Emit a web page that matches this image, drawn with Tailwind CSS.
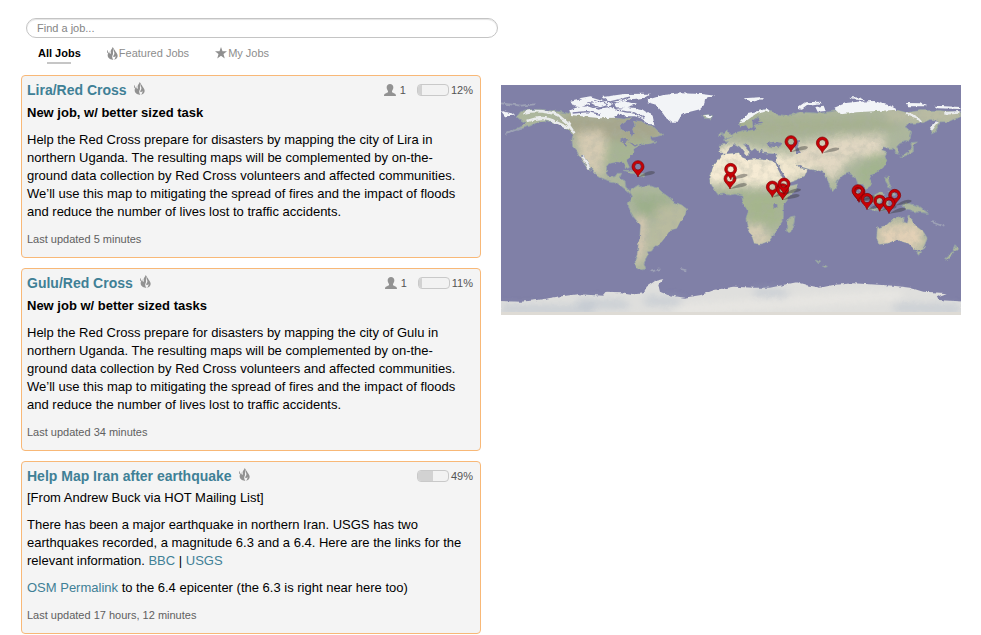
<!DOCTYPE html>
<html lang="en">
<head>
<meta charset="utf-8">
<meta name="viewport" content="width=device-width, initial-scale=1">
<title>Jobs</title>
<script src="https://cdn.jsdelivr.net/npm/@tailwindcss/browser@4"></script>
</head>
<body class="bg-white font-['Liberation_Sans',Arial,sans-serif] text-[13px] leading-[18px] text-black">
<svg class="hidden" aria-hidden="true">
  <symbol id="flame" viewBox="0 0 33 39">
    <path d="M16 0C25 5 17 12 18 18C19 24 14 26 16 32C17 35 18 36 19 38C10 39 2 33 2 25C2 19 5 16 7 13C6 19 9 21 11 20C13 17 9 14 12 9C14 6 17 4 16 0Z"/>
    <path d="M24 7C22 13 32 18 32 27C32 33 27 37 21 38C25 34 26 30 25 26C24 29 22 31 19 30C17 25 24 22 22 17C20 13 20 10 24 7Z"/>
    <path d="M2 9C1 13 5 15 1 19C-1 15-1 11 2 9Z"/>
  </symbol>
  <symbol id="person" viewBox="0 0 36 36">
    <path d="M18 0C24 0 28 4 28 10C28 15 26 18 24 21V25C28 28 36 28 36 36H0C0 28 8 28 12 25V21C10 18 8 15 8 10C8 4 12 0 18 0Z"/>
  </symbol>
  <symbol id="star" viewBox="0 0 24 24">
    <path d="M12 0L15 8.500H24L17 14L19.500 23L12 17.500L4.500 23L7 14L0 8.500H9Z"/>
  </symbol>
  <symbol id="pin" viewBox="-20 -20 80 56" overflow="visible">
    <path fill="#333" fill-opacity=".4" d="M0 31L20 19Q38 10 50 15Q54 21 36 25Z"/>
    <path fill="#c80005" stroke="#7d0004" stroke-width="2" fill-rule="evenodd" d="M0 31C-4 18-18 12-18 0A18 18 0 0 1 18 0C18 12 4 18 0 31ZM0-10A10 10 0 0 0 0 10A10 10 0 0 0 0-10Z"/>
  </symbol>
</svg>

<div class="pt-[18px] pl-[21px] pr-5">
  <header class="pl-[5px]">
    <input type="search" aria-label="Find a job" placeholder="Find a job..." class="block h-5 w-full max-w-[472px] rounded-full border border-[#c4c4c4] px-[10px] text-[11px] text-[#555] shadow-[inset_0_1px_1px_#e4e4e4] outline-none placeholder:text-[#858585]">
    <nav class="mt-[6px] flex h-[31px] gap-[26px] pl-3 text-[11px] text-[#8d8d8d]">
      <a href="#all" class="flex flex-col items-center font-bold text-black">All Jobs<span class="h-[2px] w-6 bg-[#c6c6c6]"></span></a>
      <a href="#featured" class="flex h-[18px] items-center gap-px"><svg class="h-[13px] w-[11px] fill-[#8f8f8f]"><use href="#flame"/></svg>Featured Jobs</a>
      <a href="#mine" class="flex h-[18px] items-center gap-px"><svg class="size-3 fill-[#8f8f8f]"><use href="#star"/></svg>My Jobs</a>
    </nav>
  </header>

  <main class="grid grid-cols-2 items-start gap-5">
    <section class="flex flex-col gap-[10px]">
      <article class="rounded border border-[#f8b877] bg-[#f4f4f4] px-[5px] pt-[5px] pb-[9px]">
        <header class="flex items-center">
          <h2 class="text-[14px] font-bold text-[#3f8096]"><a href="#lira">Lira/Red Cross</a></h2>
          <svg class="mb-1 ml-[7px] h-[13px] w-[11px] fill-[#929292]"><use href="#flame"/></svg>
          <div class="ml-auto flex items-center pr-[2px] text-[11px] text-[#555]">
            <svg class="mr-1 size-3 fill-[#929292]"><use href="#person"/></svg>1
            <span class="mr-[2px] ml-[11px] h-3 w-8 overflow-hidden rounded border border-[#c9c9c9] bg-[#f2f2f2]"><span class="block h-full bg-[#d2d2d2]" style="width:12%"></span></span>12%
          </div>
        </header>
        <h3 class="mt-[5px] font-bold">New job, w/ better sized task</h3>
        <p class="mt-[9px] pr-2">Help the Red Cross prepare for disasters by mapping the city of Lira in northern Uganda. The resulting maps will be complemented by on-the-ground data collection by Red Cross volunteers and affected communities. We’ll use this map to mitigating the spread of fires and the impact of floods and reduce the number of lives lost to traffic accidents.</p>
        <footer class="mt-[9px] text-[11px] text-[#606060]">Last updated 5 minutes</footer>
      </article>

      <article class="rounded border border-[#f8b877] bg-[#f4f4f4] px-[5px] pt-[5px] pb-[9px]">
        <header class="flex items-center">
          <h2 class="text-[14px] font-bold text-[#3f8096]"><a href="#gulu">Gulu/Red Cross</a></h2>
          <svg class="mb-1 ml-[7px] h-[13px] w-[11px] fill-[#929292]"><use href="#flame"/></svg>
          <div class="ml-auto flex items-center pr-[2px] text-[11px] text-[#555]">
            <svg class="mr-1 size-3 fill-[#929292]"><use href="#person"/></svg>1
            <span class="mr-[2px] ml-[11px] h-3 w-8 overflow-hidden rounded border border-[#c9c9c9] bg-[#f2f2f2]"><span class="block h-full bg-[#d2d2d2]" style="width:11%"></span></span>11%
          </div>
        </header>
        <h3 class="mt-[5px] font-bold">New job w/ better sized tasks</h3>
        <p class="mt-[9px] pr-2">Help the Red Cross prepare for disasters by mapping the city of Gulu in northern Uganda. The resulting maps will be complemented by on-the-ground data collection by Red Cross volunteers and affected communities. We’ll use this map to mitigating the spread of fires and the impact of floods and reduce the number of lives lost to traffic accidents.</p>
        <footer class="mt-[9px] text-[11px] text-[#606060]">Last updated 34 minutes</footer>
      </article>

      <article class="rounded border border-[#f8b877] bg-[#f4f4f4] px-[5px] pt-[5px] pb-[9px]">
        <header class="flex items-center">
          <h2 class="text-[14px] font-bold text-[#3f8096]"><a href="#iran">Help Map Iran after earthquake</a></h2>
          <svg class="mb-1 ml-[7px] h-[13px] w-[11px] fill-[#929292]"><use href="#flame"/></svg>
          <div class="ml-auto flex items-center pr-[2px] text-[11px] text-[#555]">
            <span class="mr-[2px] h-3 w-8 overflow-hidden rounded border border-[#c9c9c9] bg-[#f2f2f2]"><span class="block h-full bg-[#d2d2d2]" style="width:49%"></span></span>49%
          </div>
        </header>
        <p class="mt-1">[From Andrew Buck via HOT Mailing List]</p>
        <p class="mt-[9px] pr-2">There has been a major earthquake in northern Iran. USGS has two earthquakes recorded, a magnitude 6.3 and a 6.4. Here are the links for the relevant information. <a href="#bbc" class="text-[#3f8096]">BBC</a> | <a href="#usgs" class="text-[#3f8096]">USGS</a></p>
        <p class="mt-[9px]"><a href="#osm" class="text-[#3f8096]">OSM Permalink</a> to the 6.4 epicenter (the 6.3 is right near here too)</p>
        <footer class="mt-[9px] text-[11px] text-[#606060]">Last updated 17 hours, 12 minutes</footer>
      </article>
    </section>

    <svg class="mt-[10px] block h-auto w-full" viewBox="0 0 1380 690" role="img" aria-label="World map of jobs">
      <defs>
        <filter id="coast" x="0" y="0" width="1380" height="690" filterUnits="userSpaceOnUse">
          <feTurbulence type="fractalNoise" baseFrequency=".06" numOctaves="3" seed="4" result="n"/>
          <feDisplacementMap in="SourceGraphic" in2="n" scale="11" xChannelSelector="R" yChannelSelector="G"/>
          <feGaussianBlur stdDeviation="1"/>
        </filter>
        <filter id="soft" x="0" y="0" width="1380" height="690" filterUnits="userSpaceOnUse"><feGaussianBlur stdDeviation="13"/></filter>
        <filter id="mottle" x="0" y="0" width="1380" height="690" filterUnits="userSpaceOnUse">
          <feTurbulence type="fractalNoise" baseFrequency=".045" numOctaves="4" seed="8"/>
          <feColorMatrix values="0 0 0 0 .4  0 0 0 0 .43  0 0 0 0 .36  1.6 0 0 0 -.62"/>
        </filter>
        <g id="land">
          <g transform="translate(-3 -15)">
            <path d="M62 95L75 90 120 88 180 95 215 102 250 108 330 112 350 115 375 118 395 112 385 120 362 135 365 150 390 158 395 172 402 160 398 148 405 135 400 122 425 125 440 135 460 140 475 155 490 165 470 170 450 172 455 182 470 185 445 192 425 190 415 198 400 207 402 218 390 232 378 240 388 262 382 265 372 248 350 245 330 250 320 262 318 280 328 292 345 290 352 280 365 280 358 295 375 302 378 322 390 332 400 325 415 315 425 322 450 318 475 325 490 340 505 350 520 365 545 375 560 387 555 405 540 425 530 445 510 450 500 465 485 485 472 495 460 505 455 513 442 515 445 525 438 537 432 550 438 567 420 570 408 560 405 540 412 520 415 495 420 465 422 435 400 410 387 387 385 370 395 350 388 338 368 322 350 308 325 302 300 292 285 280 270 262 262 245 250 225 242 226 255 250 272 272 262 265 245 240 232 215 218 200 216 180 220 165 205 150 185 135 165 128 140 122 120 125 95 135 60 148 20 160 60 140 80 130 62 120 50 110Z"/>
            <path d="M370 271L395 272 410 281 394 280ZM415 280L435 282 428 288 412 286ZM605 107L620 104 638 108 632 117 612 115Z"/>
          </g>
          <g transform="translate(657 -15)">
            <path d="M5 225L20 222 60 218 65 232 85 240 110 238 150 242 165 245 172 265 185 290 200 310 210 318 236 312 225 335 205 352 190 372 190 415 175 440 165 460 145 485 120 492 103 490 95 465 80 435 78 415 85 395 70 370 66 348 45 342 30 345 10 342-5 345-20 325-30 305-32 290-20 260-5 240ZM200 422L212 410 225 408 222 430 212 456 200 454Z"/>
            <path d="M0 218L-2 195 20 193 25 183 10 180 30 170 45 158 72 152 88 152 112 148 102 136 132 128 120 122 112 112 96 125 98 138 86 146 78 134 60 138 58 128 75 112 100 98 130 90 155 92 168 103 210 108 240 95 270 98 300 100 330 95 360 90 400 92 450 90 520 88 560 98 600 92 660 92 722 98 722 110 700 118 685 125 660 125 655 140 640 160 632 162 640 140 655 120 630 118 610 128 570 130 555 140 575 155 570 175 555 185 540 190 530 200 540 222 530 222 520 205 505 205 490 200 485 210 500 215 495 230 500 245 490 262 470 278 450 285 445 298 455 315 440 325 425 310 420 320 430 345 420 335 410 300 400 290 390 278 370 285 355 300 345 325 338 335 328 315 315 280 300 272 270 268 250 262 235 255 225 250 240 265 262 268 255 285 235 298 205 308 195 290 175 255 170 240 172 222 150 220 130 218 125 208 115 215 105 205 95 212 85 195 70 192 90 215 80 225 60 200 45 192 30 205 20 218Z"/>
            <path d="M8 165L20 150 28 158 38 170 18 176ZM-2 160L8 158 6 168-4 170ZM572 188L592 186 580 196 580 215 560 226 543 232 545 226 566 215 576 205ZM494 292L505 292 508 310 516 325 506 322ZM504 335L520 332 524 346 510 345ZM400 333L412 340 432 358 446 377 440 380 420 360ZM452 352L480 336 490 345 482 368 462 372ZM440 383L480 387 500 390 480 393 445 390ZM495 352L515 350 500 362 510 378 500 376 494 366ZM545 375L565 370 600 380 625 400 590 396 560 390Z"/>
            <path d="M472 445L500 435 515 420 535 410 550 413 548 425 562 430 568 407 578 425 590 440 610 455 622 475 612 500 600 510 580 505 565 490 530 480 500 490 478 493 470 475ZM588 515L602 515 596 526ZM705 494L715 505 705 515 698 510ZM697 515L702 520 680 540 674 536ZM286 541L302 546 296 552ZM308 555L322 559 312 562Z"/>
          </g>
        </g>
        <mask id="landMask"><use href="#land" fill="#fff"/></mask>
      </defs>
      <rect width="1380" height="690" fill="#8080a7"/>
      <g filter="url(#coast)">
        <use href="#land" fill="#adb79d" stroke="#919fa6" stroke-width="3"/>
        <g mask="url(#landMask)">
          <g filter="url(#soft)">
            <path fill="#a6a68c" d="M180 90H480V165H220Z"/>
            <path fill="#d6cbb2" d="M225 145L300 135 320 180 300 250 310 280 240 240Z"/>
            <path fill="#a6b492" d="M320 165H460L380 260 310 240Z"/>
            <path fill="#9caf8b" d="M390 330H520L480 410 410 390Z"/>
            <path fill="#b9bb9f" d="M470 360H560V450L440 500Z"/>
            <path fill="#dccab5" d="M405 395H435L430 520 405 540Z"/>
            <path fill="#f6ebd4" d="M610 195L700 180 830 210 875 295 800 304 700 300 610 296Z"/>
            <path fill="#a5b58d" d="M630 322H860L840 420 740 410 720 342Z"/>
            <path fill="#d9ceb6" d="M730 420H780L820 475 740 485Z"/>
            <path fill="#efe5cd" d="M830 200L880 210 960 200 945 260 860 300Z"/>
            <path fill="#e2d8c3" d="M880 180L1020 155 1150 150 1150 200 1040 225 1000 290 950 250 880 225Z"/>
            <path fill="#a6b090" d="M700 95H1200V130L1100 140 820 155H700Z"/>
            <path fill="#babba3" d="M1150 65H1390V110H1160Z"/>
            <path fill="#a2b48e" d="M1100 210H1180L1140 330 1060 280Z"/>
            <path fill="#e2d0b6" d="M1130 420L1260 410 1270 480 1220 500 1130 490Z"/>
          </g>
          <rect width="1380" height="690" filter="url(#mottle)" opacity=".5"/>
        </g>
        <g fill="#8285a8">
          <ellipse cx="822" cy="178" rx="23" ry="8"/>
          <path d="M878 170L895 168 890 185 900 205 888 204 880 188Z"/>
          <path d="M356 165L372 158 386 164 374 170 378 184 372 184 368 172ZM384 172L412 180 402 185ZM817 358h12v10h-12Z"/>
        </g>
        <g fill="#f2f4f7">
          <path d="M437 45L487 30 540 25 600 27 643 32 612 43 609 60 597 73 567 80 542 90 528 113 514 113 496 100 482 80 467 60 440 52Z"/>
          <path d="M208 50L245 42 268 56 240 67 218 64ZM205 76L225 68 265 63 300 70 330 66 354 84 340 98 300 100 240 94 210 90ZM235 40L268 34 308 46 290 54 255 50ZM270 55L318 48 338 60 300 68ZM305 36L370 27 450 26 430 38 380 44 350 52 320 47ZM340 56L370 48 405 58 375 68 345 67ZM345 72L380 66 425 72 455 92 460 118 446 118 420 100 402 94 370 94 350 84ZM0 78L32 85 42 92 12 94ZM604 92L620 89 632 94 624 100ZM728 40L786 36 778 44 750 52ZM888 68L912 52 956 50 960 55 918 60 902 72ZM1000 68L1034 54 1070 50 1120 48 1170 64 1190 74 1130 78 1066 82 1020 88ZM1045 36L1080 38 1094 46 1066 44ZM1214 54L1260 55 1280 64 1222 64ZM1300 62L1378 66V72L1310 70ZM715 115L740 84 800 72 806 78 765 86 730 112ZM943 66L968 62 974 78 950 80Z"/>
          <path fill="none" stroke="#e9ebec" stroke-width="8" d="M70 82Q120 72 170 90L200 115 220 145M80 108Q130 88 165 112L205 130M245 215L264 250M1215 85L1245 95 1260 112M1310 108L1290 135M1330 85L1375 82"/>
        </g>
        <path fill="none" stroke="#8080a7" stroke-width="4" d="M215 84L260 80 300 88M250 58L290 72 320 62M330 50L390 36M350 76L400 84 430 100M280 44L320 56"/>
        <path fill="none" stroke="#9da1b6" stroke-width="5" d="M0 55L60 62 100 58M10 148L60 130M450 560L478 552M540 552L556 556M1290 410L1330 425"/>
        <path fill="#dfdfdd" d="M-10 648L60 650 110 645 170 635 230 628 307 632 317 620 360 622 400 628 427 625 437 605 462 588 487 582 472 600 477 620 500 630 550 638 600 630 640 615 700 605 757 608 807 608 857 598 887 592 917 600 957 608 997 600 1057 595 1107 598 1177 602 1227 608 1267 620 1297 622 1337 625 1307 635 1312 645 1390 650V710H-10Z"/>
        <g fill="none" stroke-width="12" opacity=".5" filter="url(#soft)">
          <path stroke="#a5b2c5" stroke-width="20" d="M0 672L280 676M430 646L540 650M760 622L860 628M1180 668L1380 672M230 652L380 660"/>
          <path stroke="#f4f1ea" stroke-width="26" d="M520 676L900 650 1200 630"/>
        </g>
      </g>
      <path fill="#dedbd5" d="M0 681H1380V690H0Z"/>
      <g>
        <use href="#pin" x="391" y="225" width="80" height="56"/>
        <use href="#pin" x="850" y="150" width="80" height="56"/>
        <use href="#pin" x="944" y="154" width="80" height="56"/>
        <use href="#pin" x="667" y="261" width="80" height="56"/>
        <use href="#pin" x="669" y="233" width="80" height="56"/>
        <use href="#pin" x="794" y="286" width="80" height="56"/>
        <use href="#pin" x="825" y="294" width="80" height="56"/>
        <use href="#pin" x="829" y="277" width="80" height="56"/>
        <use href="#pin" x="1054" y="301" width="80" height="56"/>
        <use href="#pin" x="1051" y="297" width="80" height="56"/>
        <use href="#pin" x="1161" y="311" width="80" height="56"/>
        <use href="#pin" x="1078" y="323" width="80" height="56"/>
        <use href="#pin" x="1116" y="328" width="80" height="56"/>
        <use href="#pin" x="1144" y="335" width="80" height="56"/>
      </g>
    </svg>
  </main>
</div>
</body>
</html>
